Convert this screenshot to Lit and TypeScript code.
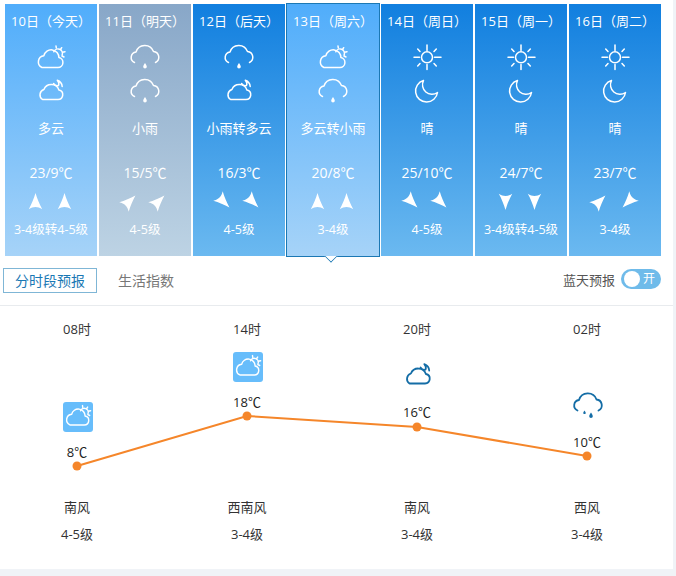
import { LitElement, html, css, svg } from 'lit';
import { customElement } from 'lit/decorators.js';

type Icon = 'cloudSun' | 'cloudMoon' | 'rain' | 'rainHeavy' | 'sun' | 'moon';

interface Day {
  date: string;
  day: Icon;
  night: Icon;
  text: string;
  temp: string;
  arrows: [number, number];
  wind: string;
  tone: 'today' | 'rainy' | 'normal' | 'active';
}

const DAYS: Day[] = [
  { date: '10日（今天）', day: 'cloudSun', night: 'cloudMoon', text: '多云', temp: '23/9℃', arrows: [0, 0], wind: '3-4级转4-5级', tone: 'today' },
  { date: '11日（明天）', day: 'rain', night: 'rain', text: '小雨', temp: '15/5℃', arrows: [45, 45], wind: '4-5级', tone: 'rainy' },
  { date: '12日（后天）', day: 'rain', night: 'cloudMoon', text: '小雨转多云', temp: '16/3℃', arrows: [135, 135], wind: '4-5级', tone: 'normal' },
  { date: '13日（周六）', day: 'cloudSun', night: 'rain', text: '多云转小雨', temp: '20/8℃', arrows: [0, 0], wind: '3-4级', tone: 'active' },
  { date: '14日（周日）', day: 'sun', night: 'moon', text: '晴', temp: '25/10℃', arrows: [135, 135], wind: '4-5级', tone: 'normal' },
  { date: '15日（周一）', day: 'sun', night: 'moon', text: '晴', temp: '24/7℃', arrows: [180, 180], wind: '3-4级转4-5级', tone: 'normal' },
  { date: '16日（周二）', day: 'sun', night: 'moon', text: '晴', temp: '23/7℃', arrows: [45, 225], wind: '3-4级', tone: 'normal' },
];

// top = distance of the icon from the chart area's top, follows the temperature
const HOURS = [
  { time: '08时', icon: 'cloudSun' as Icon, boxed: true, temp: '8℃', top: 56, dir: '南风', wind: '4-5级' },
  { time: '14时', icon: 'cloudSun' as Icon, boxed: true, temp: '18℃', top: 6, dir: '西南风', wind: '3-4级' },
  { time: '20时', icon: 'cloudMoon' as Icon, boxed: false, temp: '16℃', top: 16, dir: '南风', wind: '3-4级' },
  { time: '02时', icon: 'rainHeavy' as Icon, boxed: false, temp: '10℃', top: 46, dir: '西风', wind: '3-4级' },
];

const RAIN_CLOUD = svg`<path d="M9.5 20.5A5.5 5.5 0 0 1 11 10a9.2 9.2 0 0 1 17.5-.5 5.8 5.8 0 0 1 2 11" />`;

const ICONS: Record<Icon, ReturnType<typeof svg>> = {
  cloudSun: svg`
    <path d="M11 25.5h16a5 5 0 0 0 .9-9.9 7.6 7.6 0 0 0-15-1.9 6.2 6.2 0 0 0-1.9 11.8z" />
    <path d="M22.8 9.8a4.400 4.400 0 0 1 8.300 3.300" />
    <path d="M25 4l.3 2M30.700 5.700l-1.200 1.800M34 9.700l-2.500.5M33 15l-2-1" />`,
  cloudMoon: svg`
    <path d="M11.500 23.500H27a4.800 4.800 0 0 0 .9-9.500 8 8 0 0 0-15-.5 5.600 5.600 0 0 0-1.400 10z" />
    <path d="M22.500 7.500c1.200 1.800 3.200 2.700 5 2.100.7-1.800.3-3.800-1.200-5.400 2.800 1 4.700 3.100 4.900 6.300" />`,
  rain: svg`
    ${RAIN_CLOUD}
    <path class="fill" d="M20 21c.9 1.600 1.800 2.600 1.800 3.700a1.800 1.800 0 0 1-3.600 0c0-1.100.9-2.100 1.800-3.700z" />`,
  rainHeavy: svg`
    ${RAIN_CLOUD}
    <path class="fill" d="M16.500 20.500c.6 1 1.200 1.700 1.200 2.400a1.200 1.200 0 0 1-2.400 0c0-.7.6-1.400 1.200-2.400z" />
    <path class="fill" d="M23 22.500c.9 1.600 1.800 2.600 1.800 3.700a1.800 1.800 0 0 1-3.600 0c0-1.100.9-2.100 1.800-3.700z" />`,
  sun: svg`
    <circle cx="20" cy="15.300" r="5.500" />
    <path d="M20 3v5.500M20 22.500v5M7 15.300h5.500M27.500 15.300H34M10.700 7l2.300 2.500M27 21.500l2.300 2.500M10.700 24l2.300-2.500M27 9.500L29.300 7" />`,
  moon: svg`
    <path d="M16.500 4.500A11 11 0 1 0 30.500 16.500 9.500 9.500 0 0 1 16.500 4.500z" />`,
};

function icon(name: Icon) {
  return html`<svg class="icon" viewBox="0 0 40 34">${ICONS[name]}</svg>`;
}

@customElement('app-root')
export class AppRoot extends LitElement {
  static styles = css`
    :host {
      display: block;
      height: 576px;
      background: #f0f3f7;
      font-family: 'Open Sans', 'Noto Sans CJK SC', sans-serif;
      overflow: hidden;
    }

    .panel {
      width: 673px;
      height: 569px;
      background: #fff;
      box-sizing: border-box;
      padding-top: 4px;
    }

    .days {
      display: flex;
      gap: 2px;
      padding-left: 5px;
      height: 252px;
    }

    .day {
      position: relative;
      width: 92px;
      flex: none;
      box-sizing: border-box;
      display: flex;
      flex-direction: column;
      align-items: center;
      color: #fff;
      font-size: 13px;
    }

    .day.normal { background: linear-gradient(180deg, #117fdf, #6bb9f0); }
    .day.today { background: linear-gradient(180deg, #50adfb, #a6d3f8); }
    .day.rainy { background: linear-gradient(180deg, #88a7c8, #bdd3e4); }
    .day.active {
      background: linear-gradient(180deg, #50adfb, #a6d3f8);
      margin: -1px -1px 0;
      width: 94px;
      height: 254px;
      border: 1px solid #1b78b4;
    }
    .day.active::after {
      content: '';
      position: absolute;
      left: 39px;
      bottom: -5px;
      width: 9px;
      height: 9px;
      background: #fff;
      border-right: 1px solid #1b78b4;
      border-bottom: 1px solid #1b78b4;
      transform: rotate(45deg);
      clip-path: polygon(100% 0, 100% 100%, 0 100%);
    }

    .date { margin-top: 7px; line-height: 20px; white-space: nowrap; }
    .icon {
      display: block;
      width: 40px;
      height: 34px;
      flex: none;
      fill: none;
      stroke: currentColor;
      stroke-width: 1.5;
      stroke-linecap: round;
      stroke-linejoin: round;
      overflow: visible;
    }
    .icon .fill { fill: currentColor; stroke: none; }
    .icon-day { margin-top: 11px; }
    .text { margin-top: 8px; line-height: 20px; white-space: nowrap; }
    .temp { margin-top: 25px; line-height: 20px; font-size: 14px; }
    .arrows { display: flex; gap: 10px; margin: 9px 3px 0 0; }
    .arrow { width: 19px; height: 19px; fill: #fff; display: block; }
    .wind { margin-top: 9px; line-height: 20px; font-size: 12.5px; white-space: nowrap; }

    .bar {
      display: flex;
      align-items: center;
      height: 49px;
      padding: 0 12px 0 3px;
      border-bottom: 1px solid #e8ebee;
      font-size: 13px;
    }
    .tab {
      box-sizing: border-box;
      height: 25px;
      width: 94px;
      border: 1px solid #7fb6d6;
      color: #1a78b4;
      font-size: 14px;
      display: flex;
      align-items: center;
      justify-content: center;
      margin-top: -1px;
    }
    .tab.plain { border: 0; color: #777; width: auto; margin-left: 21px; }
    .spacer { flex: 1; }
    .switch-label { color: #555; margin-right: 6px; margin-top: -3px; }
    .switch {
      position: relative;
      width: 40px;
      height: 20px;
      border-radius: 10px;
      background: #6fbbea;
      color: #fff;
      font-size: 12px;
      line-height: 20px;
      text-align: right;
      padding-right: 6px;
      box-sizing: border-box;
      margin-top: -3px;
    }
    .knob {
      position: absolute;
      left: 3px;
      top: 2px;
      width: 16px;
      height: 16px;
      border-radius: 50%;
      background: #fff;
    }

    .hours {
      position: relative;
      display: grid;
      grid-template-columns: repeat(4, 170px);
      margin-left: -8px;
      font-size: 13px;
      color: #333;
      text-align: center;
    }
    .line {
      position: absolute;
      left: 0;
      top: 0;
      width: 680px;
      height: 264px;
      pointer-events: none;
    }
    .line polyline { fill: none; stroke: #f5862a; stroke-width: 2; }
    .line circle { fill: #f5862a; }
    .hour { display: flex; flex-direction: column; align-items: center; }
    .time { margin-top: 13px; line-height: 20px; }
    .chart {
      height: 151px;
      margin-top: 7px;
      box-sizing: border-box;
      display: flex;
      flex-direction: column;
      align-items: center;
    }
    .glyph {
      width: 30px;
      height: 30px;
      margin-left: 2px;
      color: #146da6;
      display: flex;
      align-items: center;
      justify-content: center;
    }
    .glyph .icon { stroke-width: 1.8; }
    .glyph.boxed { background: #67bdfb; color: #fff; border-radius: 3px; }
    .glyph.boxed .icon { width: 36px; height: 30.6px; stroke-width: 1.6; }
    .hour-temp { margin-top: 11px; line-height: 18px; color: #222; }
    .dir { line-height: 20px; }
    .lvl { line-height: 20px; margin-top: 7px; }
  `;

  render() {
    return html`
      <div class="panel">
        <div class="days">
          ${DAYS.map(d => html`
            <div class="day ${d.tone}">
              <div class="date">${d.date}</div>
              <div class="icon-day">${icon(d.day)}</div>
              <div>${icon(d.night)}</div>
              <div class="text">${d.text}</div>
              <div class="temp">${d.temp}</div>
              <div class="arrows">
                ${d.arrows.map(a => html`
                  <svg class="arrow" viewBox="0 0 17 17" style="transform: rotate(${a}deg)">
                    <path d="M8.5 1C10 6 12 11 14.5 15.5 12.5 14.2 10.5 13.5 8.5 13.5 6.5 13.5 4.5 14.2 2.500 15.500 5 11 7 6 8.500 1z" />
                  </svg>
                `)}
              </div>
              <div class="wind">${d.wind}</div>
            </div>
          `)}
        </div>
        <div class="bar">
          <div class="tab">分时段预报</div>
          <div class="tab plain">生活指数</div>
          <div class="spacer"></div>
          <div class="switch-label">蓝天预报</div>
          <div class="switch"><span class="knob"></span>开</div>
        </div>
        <div class="hours">
          <svg class="line" viewBox="0 0 680 264">
            <polyline points="85,160 255,110 425,121 595,150" />
            <circle cx="85" cy="160" r="4.5" />
            <circle cx="255" cy="110" r="4.5" />
            <circle cx="425" cy="121" r="4.5" />
            <circle cx="595" cy="150" r="4.5" />
          </svg>
          ${HOURS.map(h => html`
            <div class="hour">
              <div class="time">${h.time}</div>
              <div class="chart" style="padding-top: ${h.top}px">
                <div class="glyph ${h.boxed ? 'boxed' : ''}">${icon(h.icon)}</div>
                <div class="hour-temp">${h.temp}</div>
              </div>
              <div class="dir">${h.dir}</div>
              <div class="lvl">${h.wind}</div>
            </div>
          `)}
        </div>
      </div>
    `;
  }
}
